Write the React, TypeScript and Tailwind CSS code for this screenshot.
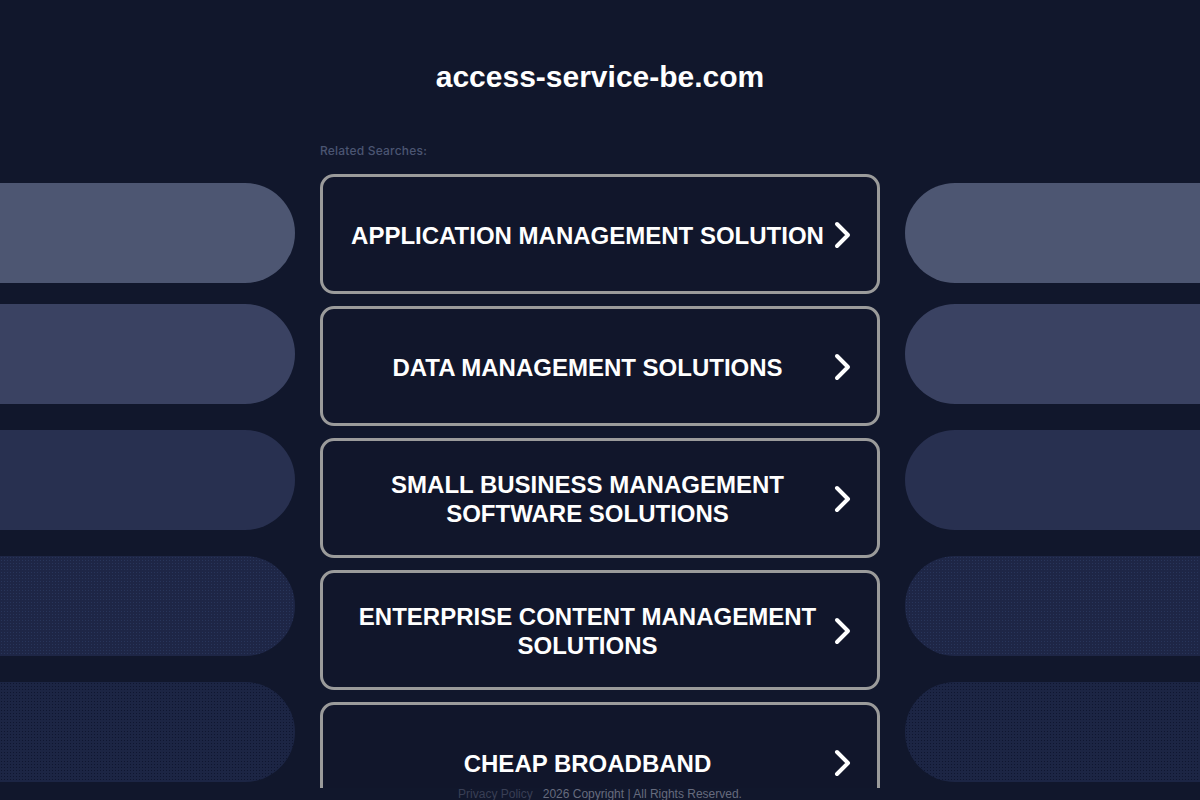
import React from "react";

const items = [
  "APPLICATION MANAGEMENT SOLUTION",
  "DATA MANAGEMENT SOLUTIONS",
  "SMALL BUSINESS MANAGEMENT SOFTWARE SOLUTIONS",
  "ENTERPRISE CONTENT MANAGEMENT SOLUTIONS",
  "CHEAP BROADBAND",
];

function Chevron() {
  return (
    <svg width="20" height="30" viewBox="0 0 20 30" className="shrink-0 ml-[5px]">
      <polyline
        points="6,4 17,15 6,26"
        fill="none"
        stroke="#ffffff"
        strokeWidth="4"
        strokeLinecap="round"
        strokeLinejoin="round"
      />
    </svg>
  );
}

function Pills({ side }: { side: "left" | "right" }) {
  const round = side === "left" ? "rounded-r-full" : "rounded-l-full ml-[25px]";
  return (
    <div className="flex flex-col pt-[183px]">
      <div className={`h-[100px] w-[295px] bg-[#4d5672] ${round}`} />
      <div className={`h-[100px] w-[295px] mt-[21px] bg-[#3a4262] ${round}`} />
      <div className={`h-[100px] w-[295px] mt-[26px] bg-[#283050] ${round}`} />
      <div
        className={`h-[100px] w-[295px] mt-[26px] bg-[#1e2646] bg-[radial-gradient(#28355a_0.6px,transparent_0.8px)] bg-[length:3px_3px] ${round}`}
      />
      <div
        className={`h-[100px] w-[295px] mt-[26px] bg-[#1c2544] bg-[radial-gradient(#0f1630_0.6px,transparent_0.8px)] bg-[length:3px_3px] ${round}`}
      />
    </div>
  );
}

export default function App() {
  return (
    <div className="h-[800px] w-full overflow-hidden bg-[#11172c] flex flex-col font-['Liberation_Sans',Arial,sans-serif]">
      <div className="h-[788px] overflow-hidden flex flex-row shrink-0">
        <div className="w-[320px] shrink-0">
          <Pills side="left" />
        </div>
        <div className="w-[560px] shrink-0 flex flex-col">
          <h1 className="pt-[59px] text-center text-white font-bold text-[30px] leading-[36px]">
            access-service-be.com
          </h1>
          <div className="mt-[48px] text-[12px] leading-[16px] text-[#4b5572] font-medium tracking-[0.2px] font-['Inter',sans-serif]">
            Related Searches:
          </div>
          <div className="mt-[15px] flex flex-col gap-[12px]">
            {items.map((t) => (
              <div
                key={t}
                className="h-[120px] shrink-0 border-[3px] border-[#9b9b9b] rounded-[14px] bg-[#11162b] flex items-center px-[26px] pt-[2px]"
              >
                <div className="flex-1 text-center text-white font-bold text-[24px] leading-[29px]">
                  {t}
                </div>
                <Chevron />
              </div>
            ))}
          </div>
        </div>
        <div className="w-[320px] shrink-0">
          <Pills side="right" />
        </div>
      </div>
      <div className="flex justify-center items-center gap-[10px] text-[12px] leading-[12px] font-['Liberation_Sans',Arial,sans-serif]">
        <span className="text-[#393f55]">Privacy Policy</span>
        <span className="text-[#666b7e]">2026 Copyright | All Rights Reserved.</span>
      </div>
    </div>
  );
}
